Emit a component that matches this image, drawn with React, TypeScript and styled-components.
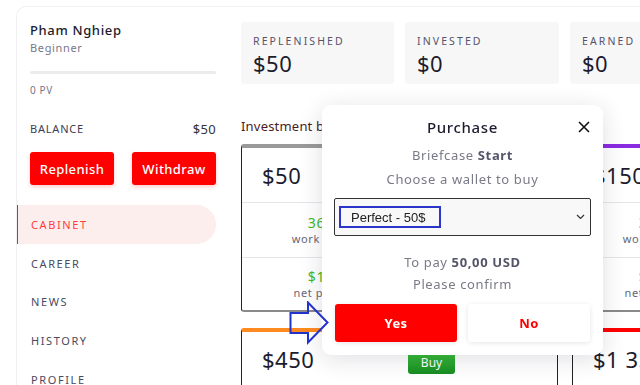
import styled, { createGlobalStyle } from 'styled-components'

const Global = createGlobalStyle`
  html, body { margin: 0; padding: 0; overflow: hidden; background: #fff; }
  body { font-family: "Noto Sans", "Open Sans", sans-serif; color: #1c1c2e; letter-spacing: 0.04em; }
  * { box-sizing: border-box; }
`

const Frame = styled.div`
  margin: 6px 0 0 16px;
  display: grid;
  grid-template-columns: 210px 1fr;
  border-top: 1px solid #f1f1f3;
  border-left: 1px solid #f1f1f3;
  border-top-left-radius: 10px;
  height: 379px;
  overflow: hidden;
`

const Sidebar = styled.aside`
  padding: 15px 11px 0 13px;
`

const Name = styled.div`
  font-size: 13px;
  line-height: 16px;
  font-weight: 500;
  color: #1c1c2e;
`

const Rank = styled.div`
  margin-top: 3px;
  font-size: 11px;
  line-height: 14px;
  color: #77778a;
`

const Progress = styled.div`
  margin-top: 16px;
  height: 3px;
  border-radius: 2px;
  background: #ececee;
`

const Points = styled.div`
  margin-top: 10px;
  font-size: 10px;
  line-height: 12px;
  color: #77778a;
`

const BalanceRow = styled.div`
  margin-top: 26px;
  display: flex;
  justify-content: space-between;
  font-size: 11px;
  line-height: 14px;
  letter-spacing: 0.8px;
  color: #3c3c55;
  span:last-child { font-size: 13px; letter-spacing: 0.3px; color: #333; }
`

const Actions = styled.div`
  margin-top: 16px;
  display: flex;
  justify-content: space-between;
`

const RedButton = styled.button`
  width: 84px;
  height: 33px;
  border: 0;
  border-radius: 3px;
  background: #ff0000;
  color: #fff;
  font-family: inherit;
  font-size: 13px;
  font-weight: 500;
  letter-spacing: 0.4px;
  box-shadow: 0 2px 4px rgba(255, 0, 0, 0.2);
`

const Nav = styled.nav`
  margin: 20px 0 0 -14px;
`

const NavItem = styled.div<{ $active?: boolean }>`
  height: 38.7px;
  display: flex;
  align-items: center;
  padding-left: 13px;
  font-size: 11px;
  letter-spacing: 1.6px;
  color: ${p => (p.$active ? '#ff3b3b' : '#4a4a60')};
  background: ${p => (p.$active ? '#fdeeee' : 'transparent')};
  border-left: 2px solid ${p => (p.$active ? '#ff1a1a' : 'transparent')};
  border-radius: 0 20px 20px 0;
`

const Main = styled.main`
  padding: 15px 0 0 14px;
`

const Stats = styled.div`
  display: grid;
  grid-template-columns: 153px 154px 154px;
  gap: 11px;
`

const Stat = styled.div`
  height: 62px;
  background: #f7f7f8;
  border-radius: 3px;
  padding: 12px 12px 0;
`

const StatLabel = styled.div`
  font-size: 10.5px;
  line-height: 14px;
  letter-spacing: 2.1px;
  color: #555568;
`

const StatValue = styled.div`
  margin-top: 1px;
  font-size: 22px;
  line-height: 28px;
  letter-spacing: 0.5px;
  color: #1c1c2e;
`

const SectionTitle = styled.div`
  margin-top: 34px;
  font-size: 13px;
  line-height: 16px;
  letter-spacing: 0.2px;
  color: #4a1c1c;
`

const Plans = styled.div`
  margin-top: 10px;
  display: grid;
  grid-template-columns: 317px 317px;
  column-gap: 14px;
  row-gap: 16px;
`

const Plan = styled.div<{ $color: string }>`
  height: 168px;
  border: 1px solid #222;
  border-top: 4px solid ${p => p.$color};
  border-bottom: 2px solid #8a8a8a;
  border-radius: 3px;
  background: #fff;
  display: grid;
  grid-template-rows: 55px 55px 1fr;
`

const PlanHead = styled.div`
  display: grid;
  grid-template-columns: 158px 1fr;
  align-items: center;
  border-bottom: 1px solid #e6e6ea;
`

const Price = styled.div`
  padding-left: 20px;
  font-size: 22px;
  line-height: 28px;
  letter-spacing: 0.5px;
  color: #1c1c2e;
`

const BuyButton = styled.button`
  justify-self: start;
  margin: 7px 0 0 8px;
  width: 47px;
  height: 23px;
  border: 0;
  border-radius: 3px;
  background: linear-gradient(#3cc23c, #178c22);
  color: #fff;
  font-family: inherit;
  font-size: 12px;
`

const PlanRow = styled.div<{ $last?: boolean }>`
  display: grid;
  grid-template-columns: 1fr 1fr;
  border-bottom: ${p => (p.$last ? '0' : '1px solid #e6e6ea')};
`

const Figure = styled.div`
  display: flex;
  flex-direction: column;
  align-items: center;
  justify-content: center;
  b { font-weight: 400; font-size: 14px; line-height: 18px; color: #3fba1a; }
  span { font-size: 11px; line-height: 14px; color: #666677; }
`

const Modal = styled.div`
  position: fixed;
  left: 322px;
  top: 105px;
  width: 281px;
  height: 250px;
  padding: 12px 12px;
  background: #fff;
  border-radius: 9px;
  box-shadow: 0 4px 24px rgba(30, 30, 60, 0.14);
  text-align: center;
`

const ModalTitle = styled.div`
  font-size: 15px;
  line-height: 20px;
  font-weight: 500;
  color: #1c1c2e;
`

const Close = styled.button`
  position: absolute;
  right: 13px;
  top: 16px;
  padding: 0;
  border: 0;
  background: none;
  display: flex;
`

const Line = styled.div<{ $gap: number }>`
  margin-top: ${p => p.$gap}px;
  font-size: 13px;
  line-height: 18px;
  color: #7a7a88;
  strong { color: #55556a; font-weight: 700; }
`

const Select = styled.div`
  margin-top: 10px;
  height: 38px;
  border: 1px solid #333;
  border-radius: 2px;
  background: #f8f8f8;
  display: flex;
  align-items: center;
  justify-content: space-between;
  padding: 0 5px 0 4px;
`

const Option = styled.div`
  width: 102px;
  height: 22px;
  border: 2px solid #2b35c9;
  display: flex;
  align-items: center;
  padding-left: 10px;
  font-family: "Liberation Sans", Arial, sans-serif;
  font-size: 13px;
  letter-spacing: 0;
  color: #222;
`

const Choices = styled.div`
  margin-top: 11px;
  display: grid;
  grid-template-columns: 122px 122px;
  gap: 11px;
  padding-left: 1px;
`

const Choice = styled.button<{ $primary?: boolean }>`
  height: 38px;
  border: 0;
  border-radius: 3px;
  background: ${p => (p.$primary ? '#ff0000' : '#fff')};
  color: ${p => (p.$primary ? '#fff' : '#ff0000')};
  box-shadow: 0 1px 5px rgba(0, 0, 0, 0.1);
  font-family: inherit;
  font-size: 13px;
  font-weight: 700;
  letter-spacing: 0.4px;
`

const Pointer = styled.svg`
  position: fixed;
  left: 289px;
  top: 301px;
`

const plans = [
  { price: '$50', color: '#9a9a9a', a: '365', al: 'work days', b: '$10', bl: 'net profit' },
  { price: '$150', color: '#8a2be2', a: '365', al: 'work days', b: '$30', bl: 'net profit' },
  { price: '$450', color: '#ff8a1f', a: '365', al: 'work days', b: '$90', bl: 'net profit' },
  { price: '$1 350', color: '#ff0000', a: '365', al: 'work days', b: '$270', bl: 'net profit' },
]

export default function App() {
  return (
    <>
      <Global />
      <Frame>
        <Sidebar>
          <Name>Pham Nghiep</Name>
          <Rank>Beginner</Rank>
          <Progress />
          <Points>0 PV</Points>
          <BalanceRow>
            <span>BALANCE</span>
            <span>$50</span>
          </BalanceRow>
          <Actions>
            <RedButton>Replenish</RedButton>
            <RedButton>Withdraw</RedButton>
          </Actions>
          <Nav>
            <NavItem $active>CABINET</NavItem>
            <NavItem>CAREER</NavItem>
            <NavItem>NEWS</NavItem>
            <NavItem>HISTORY</NavItem>
            <NavItem>PROFILE</NavItem>
          </Nav>
        </Sidebar>
        <Main>
          <Stats>
            <Stat>
              <StatLabel>REPLENISHED</StatLabel>
              <StatValue>$50</StatValue>
            </Stat>
            <Stat>
              <StatLabel>INVESTED</StatLabel>
              <StatValue>$0</StatValue>
            </Stat>
            <Stat>
              <StatLabel>EARNED</StatLabel>
              <StatValue>$0</StatValue>
            </Stat>
          </Stats>
          <SectionTitle>Investment briefcases</SectionTitle>
          <Plans>
            {plans.map(p => (
              <Plan key={p.price} $color={p.color}>
                <PlanHead>
                  <Price>{p.price}</Price>
                  <BuyButton>Buy</BuyButton>
                </PlanHead>
                <PlanRow>
                  <Figure><b>{p.a}</b><span>{p.al}</span></Figure>
                  <Figure><b>30%</b><span>profit</span></Figure>
                </PlanRow>
                <PlanRow $last>
                  <Figure><b>{p.b}</b><span>{p.bl}</span></Figure>
                  <Figure><b>1%</b><span>per day</span></Figure>
                </PlanRow>
              </Plan>
            ))}
          </Plans>
        </Main>
      </Frame>

      <Modal>
        <ModalTitle>Purchase</ModalTitle>
        <Close aria-label="close">
          <svg width="12" height="12" viewBox="0 0 12 12">
            <path d="M1 1 L11 11 M11 1 L1 11" stroke="#111" strokeWidth="1.6" fill="none" />
          </svg>
        </Close>
        <Line $gap={9}>Briefcase <strong>Start</strong></Line>
        <Line $gap={6}>Choose a wallet to buy</Line>
        <Select>
          <Option>Perfect - 50$</Option>
          <svg width="9" height="6" viewBox="0 0 9 6">
            <path d="M1 1 L4.5 4.5 L8 1" stroke="#333" strokeWidth="1.2" fill="none" />
          </svg>
        </Select>
        <Line $gap={17}>To pay <strong>50,00 USD</strong></Line>
        <Line $gap={4}>Please confirm</Line>
        <Choices>
          <Choice $primary>Yes</Choice>
          <Choice>No</Choice>
        </Choices>
      </Modal>

      <Pointer width="42" height="44" viewBox="0 0 42 44">
        <path
          d="M1.5 12 L19 12 L19 1.5 L38.5 21.5 L19 41.5 L19 32 L1.5 32 Z"
          fill="none"
          stroke="#2233cc"
          strokeWidth="2"
          strokeLinejoin="miter"
        />
      </Pointer>
    </>
  )
}
